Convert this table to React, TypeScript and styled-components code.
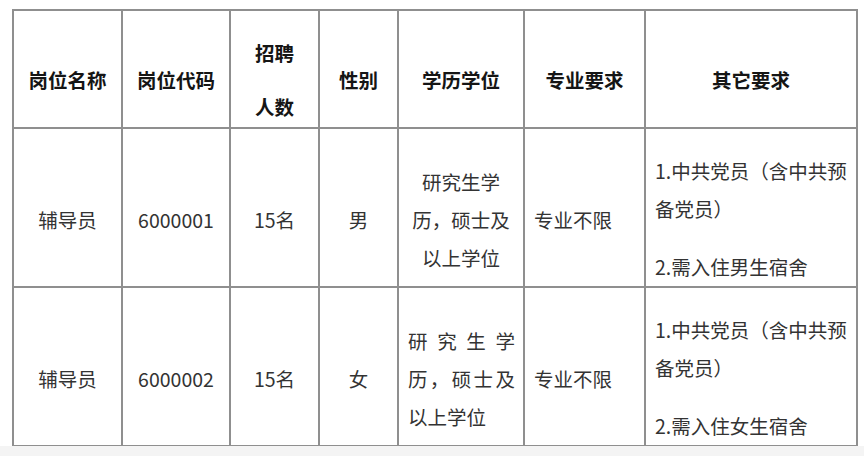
import React from 'react';
import styled, { createGlobalStyle } from 'styled-components';

const GlobalStyle = createGlobalStyle`
    html, body {
        margin: 0;
        padding: 0;
        background: #f4f4f4;
        font-family: "Noto Sans CJK SC", "Noto Sans", sans-serif;
    }
`;

const Page = styled.div`
    background: #ffffff;
    height: 446px;
    padding: 9px 0 0 12px;
    box-sizing: border-box;
`;

const Table = styled.table`
    border-collapse: collapse;
    table-layout: fixed;
    width: 845px;
    font-size: 19.5px;
    color: #333333;
`;

const HeadRow = styled.tr`
    height: 118px;
`;

const BodyRow = styled.tr`
    height: 159px;
`;

const HeadCell = styled.th`
    border: 2px solid #8f8f8f;
    font-weight: 700;
    color: #151515;
    text-align: center;
    vertical-align: middle;
    padding: 0;
    line-height: 32px;
`;

const Cell = styled.td<{ $align?: 'left' | 'center' }>`
    border: 2px solid #8f8f8f;
    text-align: ${p => p.$align ?? 'center'};
    vertical-align: middle;
    padding: 0 ${p => (p.$align === 'left' ? '8px' : '0')} 0 ${p => (p.$align === 'left' ? '9px' : '0')};
    line-height: 38px;
`;

// paragraphs carry their own space-before, as in the source document
const Para = styled.p<{ $before?: number }>`
    margin: ${p => p.$before ?? 24}px 0 0 0;
`;

const Line = styled.span<{ $spread?: boolean }>`
    display: block;
    text-align: ${p => (p.$spread ? 'justify' : 'inherit')};
    text-align-last: ${p => (p.$spread ? 'justify' : 'auto')};
`;

const widths = [109, 108, 89, 79, 126, 121, 212];

const headers = ['岗位名称', '岗位代码', '招聘|人数', '性别', '学历学位', '专业要求', '其它要求'];

const rows = [
    { code: '6000001', sex: '男', dorm: '2.需入住男生宿舍', spread: false },
    { code: '6000002', sex: '女', dorm: '2.需入住女生宿舍', spread: true },
];

const App = () => {
    return (
        <>
            <GlobalStyle />
            <Page>
                <Table>
                    <colgroup>
                        {widths.map((w, i) => (
                            <col key={i} style={{ width: w }} />
                        ))}
                    </colgroup>
                    <tbody>
                        <HeadRow>
                            {headers.map(h => (
                                <HeadCell key={h}>
                                    {h.split('|').map(t => (
                                        <Para key={t} $before={22}>{t}</Para>
                                    ))}
                                </HeadCell>
                            ))}
                        </HeadRow>
                        {rows.map(r => (
                            <BodyRow key={r.code}>
                                <Cell><Para>辅导员</Para></Cell>
                                <Cell><Para>{r.code}</Para></Cell>
                                <Cell><Para>15名</Para></Cell>
                                <Cell><Para>{r.sex}</Para></Cell>
                                <Cell $align={r.spread ? 'left' : 'center'}>
                                    <Para>
                                        <Line $spread={r.spread}>研究生学</Line>
                                        <Line $spread={r.spread}>历，硕士及</Line>
                                        <Line>以上学位</Line>
                                    </Para>
                                </Cell>
                                <Cell $align="left"><Para>专业不限</Para></Cell>
                                <Cell $align="left">
                                    <Para $before={22}>1.中共党员（含中共预备党员）</Para>
                                    <Para $before={20}>{r.dorm}</Para>
                                </Cell>
                            </BodyRow>
                        ))}
                    </tbody>
                </Table>
            </Page>
        </>
    );
};

export default App;
